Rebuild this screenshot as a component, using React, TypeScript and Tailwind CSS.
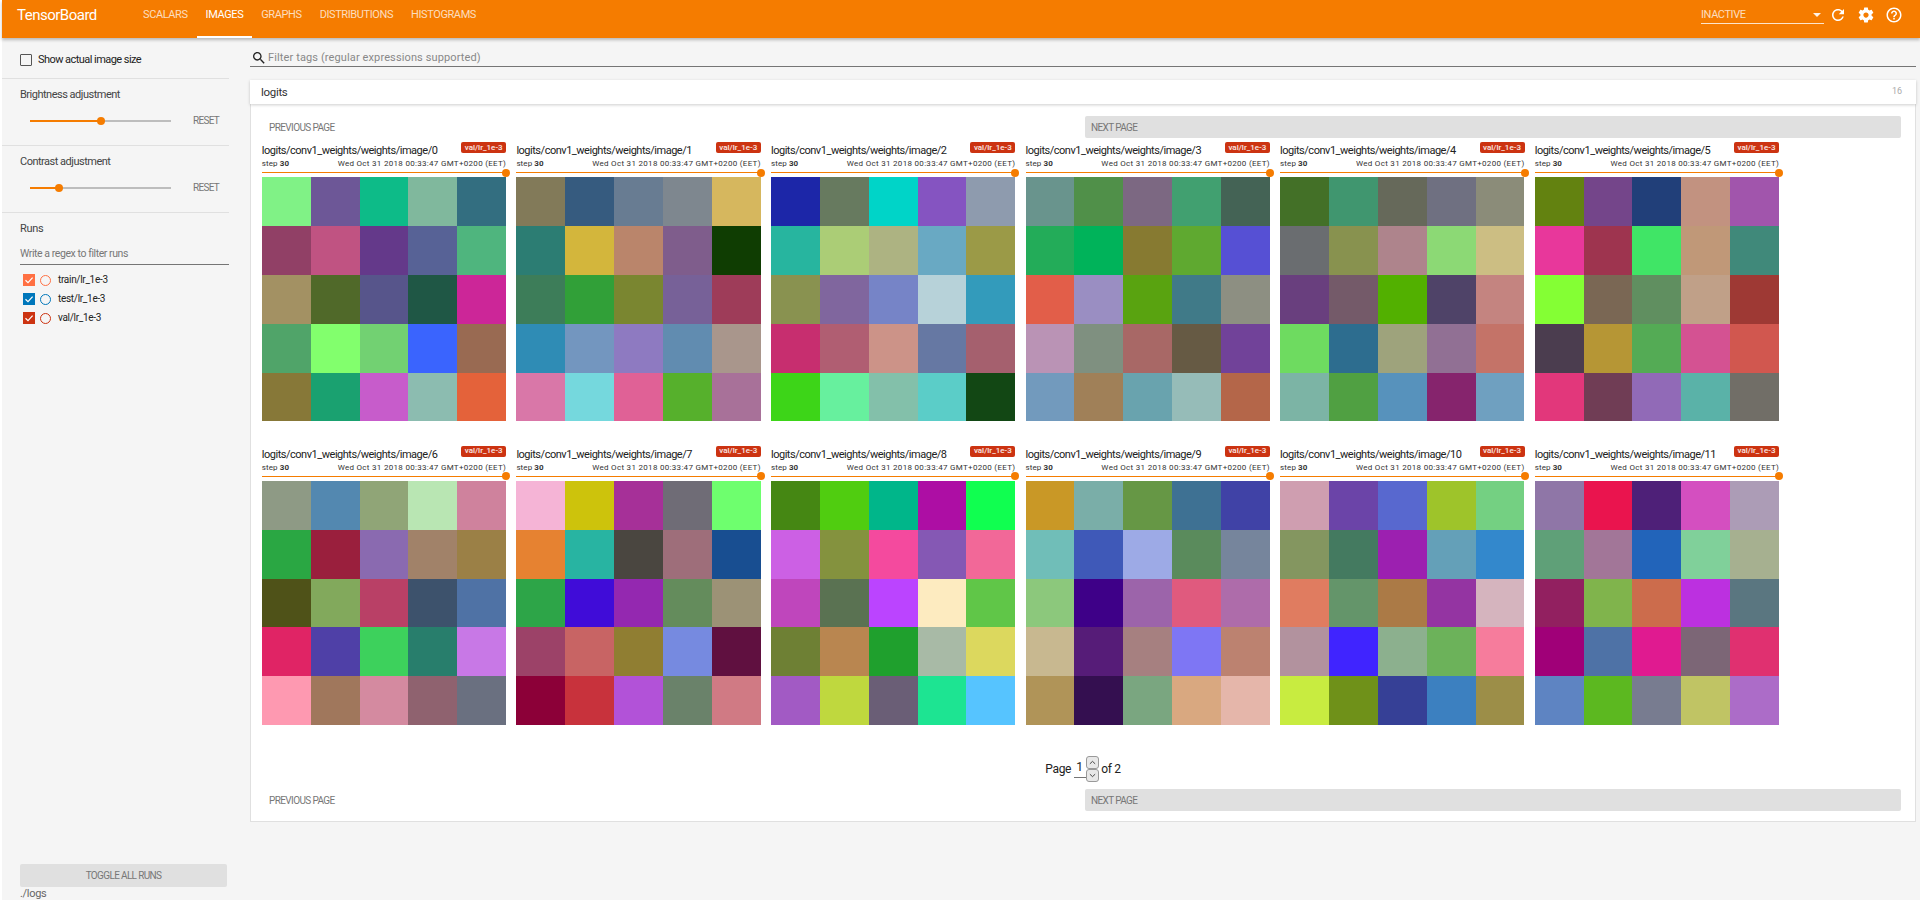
const imageColors = [
  ["#80f286", "#6d5797", "#0dbb88", "#80b89d", "#336e80", "#914066", "#c05382", "#64398a", "#576296", "#4fb57e", "#a39163", "#506929", "#57558b", "#1f5745", "#cc2698", "#50a469", "#82ff6d", "#72d172", "#3a64fe", "#996a52", "#877838", "#1aa170", "#c75ccb", "#8cbcb0", "#e4623a"],
  ["#827a59", "#365b7f", "#687c92", "#7e878f", "#d6b75e", "#2c7d73", "#d3b63c", "#ba856b", "#7f5d8c", "#0f3d02", "#3d7d59", "#31a038", "#7a8630", "#776198", "#9e3c59", "#2f8cb5", "#7396bf", "#8e7ac1", "#618cb0", "#a9968c", "#d977a8", "#75d8dd", "#e06196", "#56b02c", "#a87199"],
  ["#1c26a8", "#677a5f", "#00d4c8", "#8554c1", "#8e9bae", "#27b59f", "#abcd76", "#adb382", "#69a9c3", "#9b9a47", "#899250", "#80669e", "#7684c7", "#b7d2d9", "#339bbb", "#c72e6f", "#b05e72", "#cc9388", "#6678a3", "#a5606e", "#3dd518", "#67f09e", "#83c0aa", "#5bcdc8", "#124714"],
  ["#69948d", "#509049", "#7c6882", "#41a070", "#446355", "#23ac59", "#00b35a", "#877a31", "#5fa930", "#5650d4", "#e25e49", "#9a8ec2", "#59a310", "#407a88", "#8d8f82", "#ba93b5", "#7f9080", "#a86866", "#665a44", "#714299", "#729abd", "#a08058", "#69a3ae", "#96bcb8", "#b46649"],
  ["#437027", "#40966f", "#66695a", "#6f7081", "#8b8c79", "#6a6d70", "#88924f", "#ae848c", "#8cd975", "#ccbe83", "#693f7e", "#745a69", "#52b000", "#4f4368", "#c48480", "#6edb60", "#2d6d8f", "#9ea37c", "#917094", "#c47368", "#7cb4a5", "#50a042", "#5792bc", "#86246d", "#6fa0c0"],
  ["#638210", "#74458a", "#213f79", "#c29280", "#a155ac", "#e8379b", "#9e344f", "#40e566", "#c09878", "#40897a", "#84ff34", "#7a6754", "#608f60", "#c0a088", "#9e3934", "#4b3d4f", "#b69635", "#54ab55", "#d45292", "#d1574f", "#e2377b", "#703d55", "#916ab7", "#5ab2a8", "#716e67"],
  ["#8e9a85", "#5388b0", "#90a577", "#b9e6b3", "#cf829d", "#2aa743", "#9a1f3d", "#8a6ab0", "#a18269", "#9b8046", "#4f5218", "#82a95c", "#b94066", "#3d526c", "#4f72a5", "#e02465", "#4f40a7", "#3dd15c", "#287e6c", "#c878e6", "#fe99b1", "#a0775c", "#d48aa0", "#8f626f", "#6a7080"],
  ["#f5b4d6", "#cdc30c", "#a63098", "#6f6c76", "#6eff6e", "#e68231", "#28b4a2", "#4a4640", "#9e6e7a", "#184e91", "#2da548", "#400cd8", "#9428b0", "#648c5c", "#9c9276", "#9c4268", "#c86464", "#907e32", "#768ae0", "#601040", "#8c0038", "#c8323c", "#b252d8", "#6a826a", "#d07a84"],
  ["#458713", "#50cd10", "#00b68a", "#ad0ea4", "#10ff50", "#cc60e4", "#84923e", "#f44a9e", "#8558b4", "#f26898", "#bf46bc", "#5a7252", "#bb44ff", "#fdebc0", "#60c648", "#6e8034", "#b98650", "#1fa02d", "#a8baa6", "#dcd85e", "#a25ac4", "#bfd83e", "#6a5e76", "#1de492", "#56c4ff"],
  ["#c99826", "#7aaea8", "#669745", "#3e7193", "#4042a6", "#70beb8", "#3f59b8", "#9daae6", "#5a8b5c", "#76859c", "#8cc87c", "#3e0088", "#9c64aa", "#e05a7e", "#ae6caa", "#c8b890", "#561c78", "#a68080", "#7e76f4", "#bc8270", "#b09458", "#340f50", "#7aa680", "#d9a880", "#e5b6aa"],
  ["#cf9eb0", "#6b44a8", "#5868cf", "#9ec42a", "#74d082", "#849660", "#447a60", "#9c20b0", "#64a0b8", "#3388cc", "#e07c60", "#64956a", "#ab7a46", "#9434a2", "#d5b4be", "#b2929e", "#4024ff", "#8cb08e", "#6cb25a", "#f67c9c", "#c8ec40", "#6f9119", "#364096", "#3c80c0", "#9c8e48"],
  ["#8f76a7", "#ea144e", "#4e2078", "#d44fc0", "#ac9cb6", "#5fa078", "#a27698", "#2264ba", "#80d09a", "#a6b090", "#922060", "#80b44c", "#cc6c4c", "#bc30e0", "#5a7680", "#a00078", "#4e72a6", "#e01a90", "#7c6676", "#e03070", "#5e84c2", "#5cb820", "#787c90", "#c0c464", "#ac6cc8"],
];

const tabs = ["Scalars", "Images", "Graphs", "Distributions", "Histograms"];

const runs = [
  { name: "train/lr_1e-3", color: "#ff7043" },
  { name: "test/lr_1e-3", color: "#0077bb" },
  { name: "val/lr_1e-3", color: "#cc3311" },
];

function MaterialIcon({ d, className }: { d: string; className: string }) {
  return (
    <svg viewBox="0 0 24 24" fill="currentColor" className={className}>
      <path d={d} />
    </svg>
  );
}

function Toolbar() {
  return (
    <header className="relative z-10 flex h-[38px] shrink-0 items-center bg-[#f57c00] pl-[15px] pr-[17px] text-white shadow-[0_2px_3px_rgba(0,0,0,0.25)]">
      <div className="mb-[8px] w-[117px] text-[15px] leading-none tracking-[-0.5px]">TensorBoard</div>
      <nav className="flex h-full">
        {tabs.map((tab) => (
          <div
            key={tab}
            className={
              tab === "Images"
                ? "flex h-full items-center border-b-2 border-white px-[9px] pb-[5px] text-[11px] uppercase tracking-[-0.4px] text-white"
                : "flex h-full items-center border-b-2 border-transparent px-[9px] pb-[5px] text-[11px] uppercase tracking-[-0.4px] text-white/75"
            }
          >
            {tab}
          </div>
        ))}
      </nav>
      <div className="mb-[14px] ml-auto flex h-[24px] w-[123px] items-center justify-between border-b border-white/80 pr-[3px] pt-[7px] text-[11px] tracking-[-0.4px] text-white/75">
        INACTIVE
        <span className="h-0 w-0 border-x-[4px] border-t-[4px] border-x-transparent border-t-white/90" />
      </div>
      <MaterialIcon
        className="mb-[8px] ml-[5px] h-[18px] w-[18px]"
        d="M17.65 6.35C16.2 4.9 14.21 4 12 4c-4.42 0-7.99 3.58-7.99 8s3.57 8 7.99 8c3.73 0 6.84-2.55 7.73-6h-2.08c-.82 2.33-3.04 4-5.65 4-3.31 0-6-2.69-6-6s2.69-6 6-6c1.66 0 3.14.69 4.22 1.78L13 11h7V4l-2.35 2.35z"
      />
      <MaterialIcon
        className="mb-[8px] ml-[10px] h-[18px] w-[18px]"
        d="M19.43 12.98c.04-.32.07-.64.07-.98s-.03-.66-.07-.98l2.11-1.65c.19-.15.24-.42.12-.64l-2-3.46c-.12-.22-.39-.3-.61-.22l-2.49 1c-.52-.4-1.08-.73-1.69-.98l-.38-2.65C14.46 2.18 14.25 2 14 2h-4c-.25 0-.46.18-.49.42l-.38 2.65c-.61.25-1.17.59-1.69.98l-2.49-1c-.23-.09-.49 0-.61.22l-2 3.46c-.13.22-.07.49.12.64l2.11 1.65c-.04.32-.07.65-.07.98s.03.66.07.98l-2.11 1.65c-.19.15-.24.42-.12.64l2 3.46c.12.22.39.3.61.22l2.49-1c.52.4 1.08.73 1.69.98l.38 2.65c.03.24.24.42.49.42h4c.25 0 .46-.18.49-.42l.38-2.65c.61-.25 1.17-.59 1.69-.98l2.49 1c.23.09.49 0 .61-.22l2-3.46c.12-.22.07-.49-.12-.64l-2.11-1.65zM12 15.5c-1.93 0-3.5-1.57-3.5-3.5s1.57-3.5 3.5-3.5 3.5 1.57 3.5 3.5-1.57 3.5-3.5 3.5z"
      />
      <MaterialIcon
        className="mb-[8px] ml-[10px] h-[18px] w-[18px]"
        d="M11 18h2v-2h-2v2zm1-16C6.48 2 2 6.48 2 12s4.48 10 10 10 10-4.48 10-10S17.52 2 12 2zm0 18c-4.41 0-8-3.59-8-8s3.59-8 8-8 8 3.59 8 8-3.59 8-8 8zm0-14c-2.21 0-4 1.79-4 4h2c0-1.1.9-2 2-2s2 .9 2 2c0 2-3 1.75-3 5h2c0-2.25 3-2.5 3-5 0-2.21-1.79-4-4-4z"
      />
    </header>
  );
}

function AdjustmentSlider({ label, thumb }: { label: string; thumb: number }) {
  return (
    <section className="h-[67px] border-b border-[#e0e0e0] pl-[18px]">
      <div className="pt-[9px] text-[11px] leading-[14px] tracking-[-0.5px] text-[#444]">{label}</div>
      <div className="mt-[11px] flex items-center pl-[10px]">
        <div className="relative h-[2px] w-[141px] bg-[#bdbdbd]">
          <div className="h-full bg-[#f57c00]" style={{ width: thumb }} />
          <div
            className="absolute top-[-3px] h-[8px] w-[8px] rounded-full bg-[#f57c00]"
            style={{ left: thumb - 4 }}
          />
        </div>
        <div className="ml-[22px] text-[10px] tracking-[-0.7px] text-[#777]">RESET</div>
      </div>
    </section>
  );
}

function Sidebar() {
  return (
    <aside className="flex w-[227px] shrink-0 flex-col">
      <section className="flex h-[41px] items-center border-b border-[#e0e0e0] pl-[18px] pt-[4px] text-[11px] tracking-[-0.55px] text-[#222]">
        <span className="mr-[6px] h-[12px] w-[12px] rounded-[1px] border border-[#555]" />
        Show actual image size
      </section>
      <AdjustmentSlider label="Brightness adjustment" thumb={71} />
      <AdjustmentSlider label="Contrast adjustment" thumb={29} />
      <section className="flex flex-1 flex-col">
        <div className="pl-[18px] pt-[9px] text-[11px] leading-[14px] tracking-[-0.3px] text-[#444]">Runs</div>
        <div className="ml-[18px] mt-[11px] h-[18px] border-b border-[#757575] text-[10.5px] leading-[14px] tracking-[-0.43px] text-[#777]">
          Write a regex to filter runs
        </div>
        <div className="flex flex-col gap-[7px] pl-[21px] pt-[9px]">
          {runs.map((run) => (
            <div key={run.name} className="flex h-[12px] items-center text-[10px] tracking-[-0.3px] text-[#222]">
              <span
                className="flex h-[12px] w-[12px] items-center justify-center"
                style={{ backgroundColor: run.color }}
              >
                <svg viewBox="0 0 12 12" className="h-[12px] w-[12px]">
                  <path d="M2.5 6.2 5 8.6 9.6 3.6" fill="none" stroke="white" strokeWidth="1.2" />
                </svg>
              </span>
              <span
                className="ml-[5px] mr-[7px] h-[11px] w-[11px] rounded-full border"
                style={{ borderColor: run.color }}
              />
              <span className="pb-[2px]">{run.name}</span>
            </div>
          ))}
        </div>
        <div className="ml-[18px] mr-[2px] mt-auto flex h-[23px] items-center justify-center rounded-[2px] bg-[#e0e0e0] text-[10px] tracking-[-0.65px] text-[#777]">
          TOGGLE ALL RUNS
        </div>
        <div className="ml-[18px] h-[13px] text-[11px] leading-[14px] tracking-[-0.3px] text-[#666]">./logs</div>
      </section>
    </aside>
  );
}

function PageButtons() {
  return (
    <div className="grid grid-cols-2 gap-[7px] pl-[11px] pr-[14px] text-[10px] tracking-[-0.62px] text-[#777]">
      <div className="flex h-[22px] items-center pl-[7px]">PREVIOUS PAGE</div>
      <div className="flex h-[22px] items-center rounded-[2px] bg-[#e0e0e0] pl-[6px]">NEXT PAGE</div>
    </div>
  );
}

function ImageCard({ index }: { index: number }) {
  return (
    <div className="flex flex-col">
      <div className="flex h-[35px] flex-col">
        <div className="flex h-[14px] items-start justify-between">
          <span className="whitespace-nowrap pt-[2px] text-[11px] leading-[14px] tracking-[-0.48px] text-[#212121]">
            logits/conv1_weights/weights/image/{index}
          </span>
          <span className="flex h-[11px] w-[45px] items-center justify-center rounded-[2px] bg-[#cc3311] text-[8px] font-medium text-white/90">
            val/lr_1e-3
          </span>
        </div>
        <div className="mt-[3px] flex items-center justify-between text-[8px] leading-[10px] tracking-[0.3px] text-[#333]">
          <span className="tracking-[0.1px]">
            step <b>30</b>
          </span>
          <span>Wed Oct 31 2018 00:33:47 GMT+0200 (EET)</span>
        </div>
        <div className="relative mt-[3px] h-[1px] bg-[#f57c00]">
          <div className="absolute right-[-4px] top-[-3.5px] h-[8px] w-[8px] rounded-full bg-[#f57c00]" />
        </div>
      </div>
      <div className="grid aspect-square grid-cols-5 grid-rows-5">
        {imageColors[index].map((color, i) => (
          <div key={i} style={{ backgroundColor: color }} />
        ))}
      </div>
    </div>
  );
}

export default function App() {
  return (
    <div
      className="flex h-[900px] w-[1920px] flex-col overflow-hidden bg-white pl-[2px]"
      style={{ fontFamily: "Roboto, sans-serif" }}
    >
      <Toolbar />
      <div className="flex flex-1 bg-[#f5f5f5]">
        <Sidebar />
        <main className="flex-1 pl-[21px] pr-[4px]">
          <div className="flex h-[29px] items-center border-b border-[#757575] pl-[1px] pt-[12px] text-[11px] tracking-[0.12px] text-[#888]">
            <MaterialIcon
              className="mr-[1px] h-[16px] w-[16px] text-[#222]"
              d="M15.5 14h-.79l-.28-.27C15.41 12.59 16 11.11 16 9.5 16 5.91 13.09 3 9.5 3S3 5.91 3 9.5 5.91 16 9.5 16c1.61 0 3.09-.59 4.23-1.57l.27.28v.79l5 4.99L20.49 19l-4.99-5zm-6 0C7.01 14 5 11.99 5 9.5S7.01 5 9.5 5 14 7.01 14 9.5 11.99 14 9.5 14z"
            />
            Filter tags (regular expressions supported)
          </div>
          <div className="relative mt-[13px] flex h-[24px] items-center justify-between bg-white pl-[11px] pr-[14px] shadow-[0_1px_3px_rgba(0,0,0,0.2)]">
            <span className="pt-[1px] text-[11.5px] tracking-[-0.3px] text-[#333]">logits</span>
            <span className="text-[9px] text-[#aaa]">16</span>
          </div>
          <div className="h-[718px] border-x border-b border-[#e0e0e0] bg-white pt-[12px]">
            <PageButtons />
            <div className="mt-[4px] grid grid-cols-[repeat(6,244.4px)] gap-x-[10.2px] gap-y-[24.4px] pl-[10.8px]">
              {imageColors.map((_, i) => (
                <ImageCard key={i} index={i} />
              ))}
            </div>
            <div className="mt-[31px] flex h-[26px] items-center justify-center text-[12px] tracking-[-0.3px] text-[#212121]">
              Page
              <div className="relative ml-[3px] mr-[2px] h-[26px] w-[25px]">
                <span className="absolute left-[2px] top-[4px] leading-[14px]">1</span>
                <div className="absolute bottom-[4px] left-0 h-[1px] w-full bg-[#757575]" />
                <div className="absolute right-0 top-0 flex h-[13px] w-[13px] items-center justify-center rounded-[3px] border border-[#999] bg-[#e8e8e8]">
                  <svg viewBox="0 0 8 5" className="h-[5px] w-[7px]"><path d="M1 4 4 1.2 7 4" fill="none" stroke="#333" strokeWidth="1" /></svg>
                </div>
                <div className="absolute bottom-0 right-0 flex h-[13px] w-[13px] items-center justify-center rounded-[3px] border border-[#999] bg-[#e8e8e8]">
                  <svg viewBox="0 0 8 5" className="h-[5px] w-[7px]"><path d="M1 1 4 3.8 7 1" fill="none" stroke="#333" strokeWidth="1" /></svg>
                </div>
              </div>
              of 2
            </div>
            <div className="mt-[7px]">
              <PageButtons />
            </div>
          </div>
        </main>
      </div>
    </div>
  );
}
